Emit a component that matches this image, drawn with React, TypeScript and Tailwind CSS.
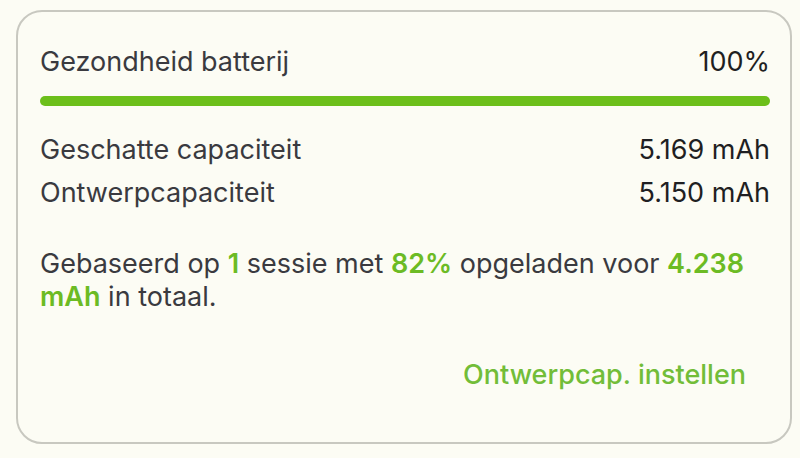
export default function App() {
  return (
    <div
      className="w-[800px] h-[458px] bg-[#fcfcf4] pt-[10px] pl-4"
      style={{ fontFamily: "Inter, 'Noto Sans', sans-serif" }}
    >
      <div className="w-[776px] h-[434px] rounded-[26px] border-2 border-[#c8c8c0] bg-[#fcfcf4] pl-[22px] pr-[20px] pt-[32px] text-[#3a3a3f]">
        {/* Battery health */}
        <div className="flex items-center justify-between text-[27px] leading-[36px]">
          <span>Gezondheid batterij</span>
          <span className="text-[#1f1f22]">100%</span>
        </div>
        <div className="mt-4 h-[10px] w-full rounded-full bg-[#6cbf1a]" />

        {/* Capacity rows */}
        <div className="mt-[22px] text-[27px] leading-[43px]">
          <div className="flex justify-between">
            <span>Geschatte capaciteit</span>
            <span className="text-[#1f1f22]">5.169 mAh</span>
          </div>
          <div className="flex justify-between">
            <span>Ontwerpcapaciteit</span>
            <span className="text-[#1f1f22]">5.150 mAh</span>
          </div>
        </div>

        <p className="mt-[33px] text-[27px] leading-[33px]">
          Gebaseerd op <span className="font-semibold text-[#6cbb24]">1</span> sessie met{" "}
          <span className="font-semibold text-[#6cbb24]">82%</span> opgeladen voor{" "}
          <span className="font-semibold text-[#6cbb24]">4.238 mAh</span> in totaal.
        </p>

        <div className="mt-[44px] flex justify-end pr-6">
          <button className="text-[27px] leading-[36px] font-medium text-[#72bd38]">
            Ontwerpcap. instellen
          </button>
        </div>
      </div>
    </div>
  );
}
